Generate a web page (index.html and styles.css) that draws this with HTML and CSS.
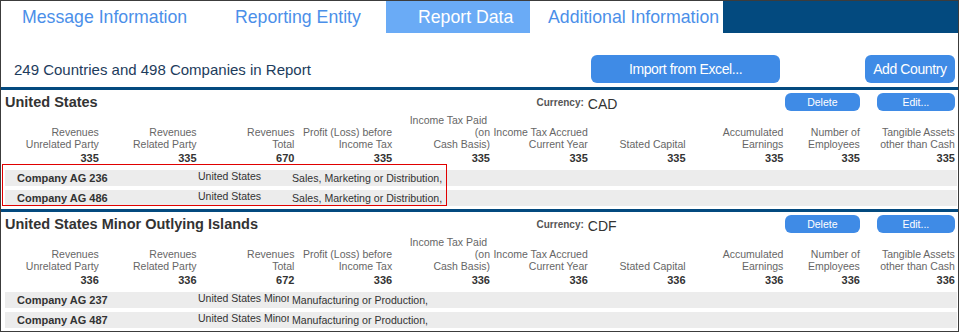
FILE: index.html
```html
<!DOCTYPE html>
<html lang="en">
<head>
    <meta charset="UTF-8">
    <meta name="viewport" content="width=device-width, initial-scale=1.0">
    <title>Report Data</title>
    <link rel="stylesheet" href="styles.css">
</head>
<body>
    <div class="frame">
        <nav class="tabs">
            <div class="tab">Message Information</div>
            <div class="tab">Reporting Entity</div>
            <div class="tab active">Report Data</div>
            <div class="tab">Additional Information</div>
        </nav>

        <div class="toolbar cols">
            <div class="summary">249 Countries and 498 Companies in Report</div>
            <button class="btn btn-import">Import from Excel...</button>
            <button class="btn btn-add">Add Country</button>
        </div>

        <!-- Country 1 -->
        <section class="country">
            <div class="country-head cols">
                <h2 class="country-name">United States</h2>
                <div class="currency-label">Currency:</div>
                <div class="currency-value">CAD</div>
                <button class="btn btn-small btn-delete">Delete</button>
                <button class="btn btn-small btn-edit">Edit...</button>
            </div>
            <div class="figures cols">
                <div class="label">Revenues<br>Unrelated Party</div>
                <div class="label">Revenues<br>Related Party</div>
                <div class="label">Revenues<br>Total</div>
                <div class="label">Profit (Loss) before<br>Income Tax</div>
                <div class="label">Income Tax Paid&nbsp;<br>(on<br>Cash Basis)</div>
                <div class="label">Income Tax Accrued<br>Current Year</div>
                <div class="label">Stated Capital</div>
                <div class="label">Accumulated<br>Earnings</div>
                <div class="label">Number of<br>Employees</div>
                <div class="label">Tangible Assets<br>other than Cash</div>
                <div class="value">335</div>
                <div class="value">335</div>
                <div class="value">670</div>
                <div class="value">335</div>
                <div class="value">335</div>
                <div class="value">335</div>
                <div class="value">335</div>
                <div class="value">335</div>
                <div class="value">335</div>
                <div class="value">335</div>
            </div>
            <div class="companies">
                <div class="company">
                    <div class="company-name">Company AG 236</div>
                    <div class="company-country">United States</div>
                    <div class="company-activity">Sales, Marketing or Distribution,</div>
                </div>
                <div class="company">
                    <div class="company-name">Company AG 486</div>
                    <div class="company-country">United States</div>
                    <div class="company-activity">Sales, Marketing or Distribution,</div>
                </div>
            </div>
            <div class="highlight"></div>
        </section>

        <!-- Country 2 -->
        <section class="country">
            <div class="country-head cols">
                <h2 class="country-name">United States Minor Outlying Islands</h2>
                <div class="currency-label">Currency:</div>
                <div class="currency-value">CDF</div>
                <button class="btn btn-small btn-delete">Delete</button>
                <button class="btn btn-small btn-edit">Edit...</button>
            </div>
            <div class="figures cols">
                <div class="label">Revenues<br>Unrelated Party</div>
                <div class="label">Revenues<br>Related Party</div>
                <div class="label">Revenues<br>Total</div>
                <div class="label">Profit (Loss) before<br>Income Tax</div>
                <div class="label">Income Tax Paid&nbsp;<br>(on<br>Cash Basis)</div>
                <div class="label">Income Tax Accrued<br>Current Year</div>
                <div class="label">Stated Capital</div>
                <div class="label">Accumulated<br>Earnings</div>
                <div class="label">Number of<br>Employees</div>
                <div class="label">Tangible Assets<br>other than Cash</div>
                <div class="value">336</div>
                <div class="value">336</div>
                <div class="value">672</div>
                <div class="value">336</div>
                <div class="value">336</div>
                <div class="value">336</div>
                <div class="value">336</div>
                <div class="value">336</div>
                <div class="value">336</div>
                <div class="value">336</div>
            </div>
            <div class="companies">
                <div class="company">
                    <div class="company-name">Company AG 237</div>
                    <div class="company-country">United States Minor Outlying Islands</div>
                    <div class="company-activity">Manufacturing or Production,</div>
                </div>
                <div class="company">
                    <div class="company-name">Company AG 487</div>
                    <div class="company-country">United States Minor Outlying Islands</div>
                    <div class="company-activity">Manufacturing or Production,</div>
                </div>
            </div>
        </section>
    </div>
</body>
</html>
```

FILE: styles.css
```css
* {
    box-sizing: border-box;
}

body {
    margin: 0;
    background: #fff;
    font-family: "Liberation Sans", Arial, sans-serif;
}

.frame {
    width: 959px;
    height: 332px;
    border: 1px solid #3c3c3c;
    overflow: hidden;
}

/* shared column grid for toolbar, headers and figures */
.cols {
    display: grid;
    grid-template-columns: repeat(8, 97.8px) 76.5px 95px;
}

/* Tabs */
.tabs {
    display: grid;
    grid-template-columns: 209px 176px 144px 193px 1fr;
    height: 32px;
    background: #034a7f;
}

.tab {
    background: #fff;
    color: #4b8fe9;
    font-size: 17.7px;
    line-height: 32px;
    white-space: nowrap;
}

.tab:nth-child(1) { padding-left: 21px; }
.tab:nth-child(2) { padding-left: 25px; }
.tab:nth-child(3) { padding-left: 32px; }
.tab:nth-child(4) { padding-left: 18px; }

.tab.active {
    background: #6aabf6;
    color: #fff;
}

/* Toolbar */
.toolbar {
    height: 54px;
    padding-top: 22px;
    padding-bottom: 4px;
    align-items: center;
}

.summary {
    grid-column: 1 / 7;
    padding-left: 13px;
    font-size: 15px;
    color: #1d3c5c;
    white-space: nowrap;
}

.btn {
    border: 0;
    padding: 0;
    border-radius: 6px;
    background: #3f8be6;
    color: #fff;
    font-family: inherit;
    font-size: 14px;
    letter-spacing: -0.4px;
    cursor: pointer;
}

.btn-import {
    grid-column: 7 / 9;
    justify-self: center;
    width: 189px;
    height: 28px;
}

.btn-add {
    grid-column: 10;
    justify-self: end;
    width: 90px;
    height: 28px;
}

/* Country sections */
.country {
    position: relative;
    border-top: 3px solid #034a7f;
    padding-bottom: 3px;
}

.country-head {
    height: 24px;
    align-items: center;
}

.country-name {
    grid-column: 1 / 6;
    margin: 0;
    padding-left: 4px;
    font-size: 14.5px;
    font-weight: bold;
    line-height: 24px;
    color: #333;
    white-space: nowrap;
}

.currency-label {
    grid-column: 6;
    text-align: right;
    padding-right: 4px;
    font-size: 10px;
    font-weight: bold;
    color: #555;
}

.currency-value {
    grid-column: 7;
    padding-top: 3px;
    font-size: 14px;
    color: #333;
}

.btn-small {
    height: 18px;
    font-size: 10.5px;
    letter-spacing: 0;
    justify-self: end;
}

.btn-delete {
    grid-column: 9;
    width: 75px;
}

.btn-edit {
    grid-column: 10;
    width: 78px;
}

.figures {
    grid-template-rows: 36px 13px;
    row-gap: 2px;
}

.label {
    align-self: end;
    text-align: right;
    font-size: 10.5px;
    line-height: 12px;
    color: #666;
    white-space: nowrap;
}

.value {
    text-align: right;
    font-size: 11px;
    font-weight: bold;
    line-height: 13px;
    color: #333;
}

.companies {
    display: flex;
    flex-direction: column;
    gap: 4px;
    margin: 5px 1px 0 4px;
}

.company {
    display: grid;
    grid-template-columns: 192px 92px 1fr;
    height: 16px;
    background: #ececec;
    color: #333;
}

.company-name {
    padding-left: 12px;
    font-size: 11px;
    font-weight: bold;
    line-height: 16px;
    white-space: nowrap;
}

.company-country {
    padding-left: 1px;
    font-size: 10.5px;
    line-height: 12px;
    white-space: nowrap;
    overflow: hidden;
}

.company-activity {
    padding-left: 3px;
    font-size: 10.6px;
    line-height: 16px;
    white-space: nowrap;
}

/* red selection frame drawn over the first country's companies */
.highlight {
    position: absolute;
    top: 74px;
    left: 1px;
    width: 445px;
    height: 42px;
    border: 1px solid #e00000;
    pointer-events: none;
}
```
